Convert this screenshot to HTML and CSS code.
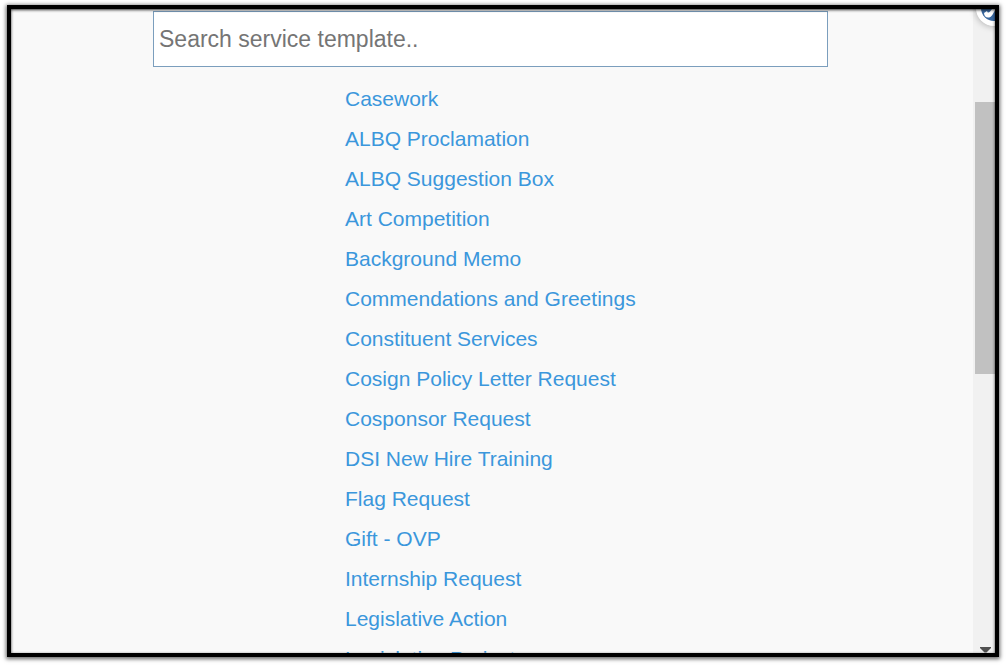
FILE: index.html
```html
<!DOCTYPE html>
<html lang="en">
<head>
<meta charset="utf-8">
<meta name="viewport" content="width=device-width, initial-scale=1">
<title>Service templates</title>
<link rel="stylesheet" href="styles.css">
</head>
<body>
<div class="frame">
  <main class="content">
    <input class="search" type="text" placeholder="Search service template.." aria-label="Search service template">
    <ul class="templates">
      <li><a href="#">Casework</a></li>
      <li><a href="#">ALBQ Proclamation</a></li>
      <li><a href="#">ALBQ Suggestion Box</a></li>
      <li><a href="#">Art Competition</a></li>
      <li><a href="#">Background Memo</a></li>
      <li><a href="#">Commendations and Greetings</a></li>
      <li><a href="#">Constituent Services</a></li>
      <li><a href="#">Cosign Policy Letter Request</a></li>
      <li><a href="#">Cosponsor Request</a></li>
      <li><a href="#">DSI New Hire Training</a></li>
      <li><a href="#">Flag Request</a></li>
      <li><a href="#">Gift - OVP</a></li>
      <li><a href="#">Internship Request</a></li>
      <li><a href="#">Legislative Action</a></li>
      <li><a href="#">Legislative Project</a></li>
    </ul>
  </main>
  <div class="scrollbar" aria-hidden="true">
    <div class="thumb"></div>
    <svg class="arrow" width="11" height="6" viewBox="0 0 11 6"><path d="M0 0H11V1L6.500 5.500H4.500L0 1Z" fill="#505050"/></svg>
  </div>
  <svg class="badge" width="36" height="36" viewBox="0 0 36 36" aria-hidden="true">
    <circle cx="18" cy="18" r="18" fill="#fff"/>
    <circle cx="18" cy="18" r="13" fill="#3a689f"/>
    <path d="M8 23C8 26 10 28 13 27.500C16 27 17 23 20 19H16C14 22 12 24 11 21Z" fill="#fff"/>
  </svg>
</div>
</body>
</html>
```
FILE: styles.css
```css
* {
  box-sizing: border-box;
}

body {
  margin: 0;
  height: 100vh;
  padding: 5px 7px 9px;
  background: #fff;
  font-family: "Liberation Sans", Arial, sans-serif;
  overflow: hidden;
}

.frame {
  position: relative;
  display: flex;
  height: 100%;
  border: 4px solid #000;
  background: #f9f9f9;
  box-shadow: 0 1px 4px 1px rgba(0, 0, 0, 0.6);
  overflow: hidden;
}

.frame::after {
  content: "";
  position: absolute;
  inset: 0;
  box-shadow: inset 0 1px 3px rgba(0, 0, 0, 0.8);
  pointer-events: none;
}

.content {
  flex: 1;
  min-width: 0;
  padding: 2px 145px 0 142px;
}

.search {
  display: block;
  width: 100%;
  height: 56px;
  padding: 0 5px;
  border: 1px solid #7b9ebd;
  border-radius: 0;
  background: #fff;
  font: 23px "Liberation Sans", Arial, sans-serif;
}

.search::placeholder {
  color: #757575;
}

.templates {
  margin: 12px 0 0;
  padding: 0 0 0 192px;
  list-style: none;
  font-size: 21px;
  line-height: 40px;
  white-space: nowrap;
}

.templates a {
  color: #3b97dc;
  text-decoration: none;
}

.scrollbar {
  display: flex;
  flex-direction: column;
  justify-content: space-between;
  width: 22px;
  padding: 93px 0 0 2px;
  background: #f1f1f1;
}

.thumb {
  height: 272px;
  background: #c1c1c1;
}

.arrow {
  margin-left: 5px;
}

.badge {
  position: absolute;
  top: -19px;
  right: -17px;
  border-radius: 50%;
  box-shadow: 0 0 6px 1px rgba(0, 0, 0, 0.25);
}
```
